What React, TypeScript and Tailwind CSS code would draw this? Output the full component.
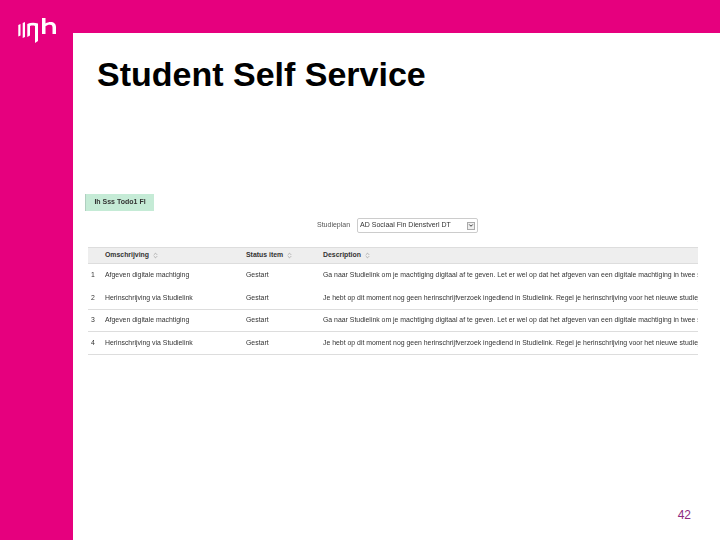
import React from 'react';
import { ChevronDown, ChevronsUpDown } from 'lucide-react';

const rows = [
  { id: 1, h: 'h-[23px]', line: '', name: 'Afgeven digitale machtiging', status: 'Gestart', desc: 'Ga naar Studielink om je machtiging digitaal af te geven. Let er wel op dat het afgeven van een digitale machtiging in twee s' },
  { id: 2, h: 'h-[23px]', line: 'border-b border-[#ddd]', name: 'Herinschrijving via Studielink', status: 'Gestart', desc: 'Je hebt op dit moment nog geen herinschrijfverzoek ingediend in Studielink. Regel je herinschrijving voor het nieuwe studiej' },
  { id: 3, h: 'h-[22px]', line: 'border-b border-[#ddd]', name: 'Afgeven digitale machtiging', status: 'Gestart', desc: 'Ga naar Studielink om je machtiging digitaal af te geven. Let er wel op dat het afgeven van een digitale machtiging in twee s' },
  { id: 4, h: 'h-[23px]', line: 'border-b border-[#ddd]', name: 'Herinschrijving via Studielink', status: 'Gestart', desc: 'Je hebt op dit moment nog geen herinschrijfverzoek ingediend in Studielink. Regel je herinschrijving voor het nieuwe studiej' },
];

function Logo() {
  return (
    <svg width="40" height="30" viewBox="0 0 40 30" fill="white" className="mt-[16px] ml-[17px]">
      <path d="M1.300 9 L3.500 8 V19.500 L1.300 20.500 Z" />
      <path d="M5.700 7 L8 6 V21 L5.700 22 Z" />
      <path d="M10.300 8 C13.500 6.500 17.500 6.500 21 7.500 V25 L18 27 V10 C16.500 9.400 14.500 9.500 13 10 V19.500 L10.300 21 Z" />
      <path d="M25 2 H28.500 V7.500 C30 6.500 32 6 33.500 6 C37 6 39 8 39 11 V18 H35.500 V11.500 C35.500 9.500 34.500 8.800 33 8.800 C31 8.800 29.500 9.500 28.500 10.200 V18 H25 Z" />
    </svg>
  );
}

function SortHead({ label }: { label: string }) {
  return (
    <span className="inline-flex items-center gap-[3px] font-bold text-[#333]">
      {label}
      <ChevronsUpDown size={7} className="text-[#888]" />
    </span>
  );
}

export default function App() {
  return (
    <div className="w-[720px] h-[540px] flex flex-col bg-[#e6007e] overflow-hidden font-['Liberation_Sans',Arial,sans-serif]">
      <div className="h-[33px] shrink-0">
        <Logo />
      </div>
      <div className="flex-1 ml-[73px] bg-white flex flex-col min-h-0">
        <h1 className="mt-[21px] ml-[24px] text-[34px] leading-[40px] font-bold text-black">Student Self Service</h1>

        <div className="mt-[100px] ml-[12px] w-[69px] h-[17px] bg-[#c5ebd6] border-l border-[#b0cfc0] flex items-center justify-center text-[7px] font-bold text-[#333] blur-[0.4px]">
          Ih Sss Todo1 Fl
        </div>

        <div className="mt-[7px] ml-[244px] flex items-center gap-[7px] text-[7px] text-[#555] blur-[0.4px]">
          <span>Studieplan</span>
          <div className="w-[121px] h-[15px] border border-[#ccc] rounded-[2px] flex items-center justify-between pl-[2px] pr-[2px] text-[#333]">
            <span>AD Sociaal Fin Dienstverl DT</span>
            <span className="w-[8px] h-[8px] border border-[#aaa] bg-[#eee] flex items-center justify-center text-black">
              <ChevronDown size={7} strokeWidth={3} />
            </span>
          </div>
        </div>

        <div className="mt-[14px] ml-[15px] w-[610px] overflow-hidden text-[6.9px] text-[#333] blur-[0.4px]">
          <div className="h-[17px] flex items-center bg-[#eeeeee] border-t border-b border-[#ddd]">
            <span className="w-[17px] shrink-0" />
            <span className="w-[141px] shrink-0"><SortHead label="Omschrijving" /></span>
            <span className="w-[77px] shrink-0"><SortHead label="Status item" /></span>
            <SortHead label="Description" />
          </div>
          {rows.map(r => (
            <div key={r.id} className={`${r.h} ${r.line} flex items-center whitespace-nowrap`}>
              <span className="w-[17px] shrink-0 pl-[3px]">{r.id}</span>
              <span className="w-[141px] shrink-0">{r.name}</span>
              <span className="w-[77px] shrink-0">{r.status}</span>
              <span>{r.desc}</span>
            </div>
          ))}
        </div>

        <div className="mt-auto mb-[18px] mr-[29px] text-right text-[12px] leading-[14px] text-[#8e2a7e]">42</div>
      </div>
    </div>
  );
}
